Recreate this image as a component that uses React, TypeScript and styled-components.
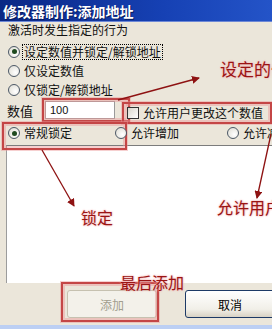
import styled, { createGlobalStyle } from 'styled-components';

const GlobalStyle = createGlobalStyle`
	html, body {
		margin: 0;
		padding: 0;
	}
	body {
		width: 272px;
		height: 329px;
		overflow: hidden;
		background: #ebe6da;
		font-family: 'Noto Sans CJK SC', 'Liberation Sans', sans-serif;
	}
`;

const App = () => {
	return (
		<>
			<GlobalStyle />
			<Window>
				<TitleBar>修改器制作:添加地址</TitleBar>
				<SectionLabel>激活时发生指定的行为</SectionLabel>
				<RadioList>
					<RadioRow>
						<Radio $checked />
						<RadioText $focused>设定数值并锁定/解锁地址</RadioText>
					</RadioRow>
					<RadioRow>
						<Radio />
						<RadioText>仅设定数值</RadioText>
					</RadioRow>
					<RadioRow>
						<Radio />
						<RadioText>仅锁定/解锁地址</RadioText>
					</RadioRow>
				</RadioList>
				<ValueRow>
					<FieldLabel>数值</FieldLabel>
					<Marked $inset="-3px">
						<ValueInput>100</ValueInput>
					</Marked>
					<Marked $inset="-4px -8px -4px -5px" $offset={6}>
						<CheckBox />
						<RadioText>允许用户更改这个数值</RadioText>
					</Marked>
				</ValueRow>
				<LockRow>
					<Marked $inset="-4px -12px -10px -6px">
						<Radio $checked />
						<RadioText>常规锁定</RadioText>
					</Marked>
					<LockOption>
						<Radio />
						<RadioText>允许增加</RadioText>
					</LockOption>
					<LockOption>
						<Radio />
						<RadioText>允许减少</RadioText>
					</LockOption>
				</LockRow>
				<ListBox />
				<ButtonBar>
					<Marked $inset="-8px -2px -4px -6px">
						<Button disabled>添加</Button>
					</Marked>
					<Button>取消</Button>
				</ButtonBar>
				<BottomEdge />

				<Arrows viewBox="0 0 272 329">
					<defs>
						<marker id="head" markerWidth="8" markerHeight="8" refX="7" refY="4" orient="auto" markerUnits="userSpaceOnUse">
							<path d="M0 0 L8 4 L0 8 Z" fill="#8e1212" />
						</marker>
					</defs>
					<line x1="118" y1="100" x2="199" y2="78" />
					<line x1="42" y1="150" x2="74" y2="206" />
					<line x1="271" y1="134" x2="257" y2="198" />
				</Arrows>
				<Note $x={220} $y={60} $size={17}>设定的值</Note>
				<Note $x={81} $y={209} $size={16}>锁定</Note>
				<Note $x={217} $y={199} $size={16}>允许用户</Note>
				<Note $x={120} $y={274} $size={16}>最后添加</Note>
			</Window>
		</>
	);
};

const Window = styled.div`
	position: relative;
	width: 272px;
	height: 329px;
	overflow: hidden;
	display: flex;
	flex-direction: column;
	background: #ebe6da;
	color: #111;
`;

const TitleBar = styled.div`
	height: 21px;
	flex-shrink: 0;
	display: flex;
	align-items: center;
	padding-left: 3px;
	background: linear-gradient(90deg, #0a2784 0%, #1641b4 60%, #2454c8 100%);
	border-bottom: 1px solid #6d88d6;
	color: #fff;
	font-size: 14px;
	font-weight: 700;
	white-space: nowrap;
	text-shadow: 1px 1px 0 #061a5c;
`;

const SectionLabel = styled.div`
	height: 16px;
	line-height: 16px;
	padding-left: 8px;
	font-size: 12px;
	white-space: nowrap;
`;

const RadioList = styled.div`
	display: flex;
	flex-direction: column;
	margin-top: 4px;
	padding-left: 8px;
`;

const RadioRow = styled.div`
	height: 19px;
	display: flex;
	align-items: center;
	gap: 3px;
`;

const Radio = styled.span<{ $checked?: boolean }>`
	position: relative;
	width: 12px;
	height: 12px;
	flex-shrink: 0;
	box-sizing: border-box;
	border-radius: 50%;
	border: 1px solid #4c5866;
	background: radial-gradient(circle at 65% 65%, #ffffff 0%, #e4e2da 80%);

	&::after {
		content: '';
		display: ${(props) => (props.$checked ? 'block' : 'none')};
		position: absolute;
		left: 2.5px;
		top: 2.5px;
		width: 5px;
		height: 5px;
		border-radius: 50%;
		background: #1f4a1f;
	}
`;

const RadioText = styled.span<{ $focused?: boolean }>`
	font-size: 12px;
	line-height: 14px;
	padding: 0 1px;
	white-space: nowrap;
	outline: ${(props) => (props.$focused ? '1px dotted #000' : 'none')};
`;

const ValueRow = styled.div`
	height: 22px;
	display: flex;
	align-items: center;
	padding-left: 7px;
`;

const FieldLabel = styled.span`
	width: 38px;
	font-size: 13px;
	white-space: nowrap;
`;

const Marked = styled.span<{ $inset: string; $offset?: number }>`
	position: relative;
	display: inline-flex;
	align-items: center;
	gap: 3px;
	margin-top: ${(props) => props.$offset ?? 0}px;

	&::after {
		content: '';
		position: absolute;
		inset: ${(props) => props.$inset};
		border: 2px solid #c44646;
		box-shadow: inset 0 0 0 2px rgba(236, 150, 150, 0.45), 0 0 0 1px rgba(236, 150, 150, 0.45);
		pointer-events: none;
	}
`;

const ValueInput = styled.span`
	width: 70px;
	height: 18px;
	box-sizing: border-box;
	display: flex;
	align-items: center;
	padding-left: 4px;
	margin-right: 12px;
	background: #fff;
	border: 1px solid #9a9a9a;
	font-family: 'Liberation Sans', sans-serif;
	font-size: 11px;
`;

const CheckBox = styled.span`
	width: 12px;
	height: 12px;
	box-sizing: border-box;
	flex-shrink: 0;
	border: 1px solid #333;
	background: linear-gradient(135deg, #d8d6cc 0%, #ffffff 100%);
`;

const LockRow = styled.div`
	height: 24px;
	display: grid;
	grid-template-columns: 107px 112px auto;
	align-items: center;
	padding-left: 8px;
`;

const LockOption = styled.span`
	display: inline-flex;
	align-items: center;
	gap: 3px;
`;

const ListBox = styled.div`
	flex: 1;
	margin-left: 6px;
	background: #fff;
	border-top: 1px solid #7c7c7c;
	border-left: 1px solid #9c9c9c;
`;

const ButtonBar = styled.div`
	height: 42px;
	flex-shrink: 0;
	display: flex;
	align-items: center;
	gap: 28px;
	padding-left: 67px;
`;

const Button = styled.button`
	width: 90px;
	height: 28px;
	flex-shrink: 0;
	border-radius: 3px;
	font-family: 'Noto Sans CJK SC', 'Liberation Sans', sans-serif;
	font-size: 12px;
	border: 1px solid #1d3a66;
	background: linear-gradient(180deg, #ffffff 0%, #f1efe8 70%, #d8d2c4 100%);
	color: #000;

	&:disabled {
		border-color: #c6c1b0;
		background: #f3f1ea;
		color: #a29e8e;
	}
`;

const BottomEdge = styled.div`
	height: 4px;
	flex-shrink: 0;
	background: #bccff3;
`;

const Arrows = styled.svg`
	position: absolute;
	inset: 0;
	width: 272px;
	height: 329px;
	pointer-events: none;

	line {
		stroke: #8e1212;
		stroke-width: 1.3;
		marker-end: url(#head);
	}
`;

const Note = styled.span<{ $x: number; $y: number; $size: number }>`
	position: absolute;
	left: ${(props) => props.$x}px;
	top: ${(props) => props.$y}px;
	font-size: ${(props) => props.$size}px;
	line-height: 1.1;
	white-space: nowrap;
	color: #9a1414;
	text-shadow: 0 0 2px #f4b4b4, 0 0 2px #f4b4b4;
`;

export default App;
